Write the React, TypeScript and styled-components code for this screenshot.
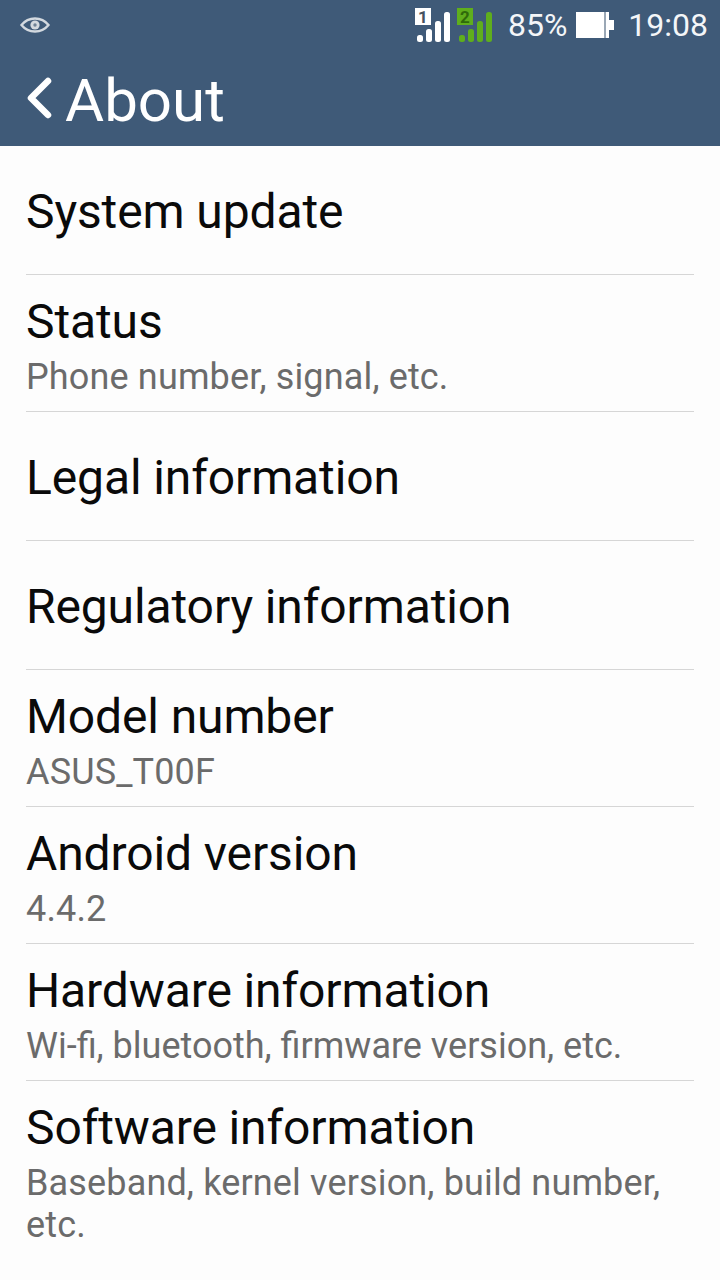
import styled, { createGlobalStyle } from 'styled-components';

const GlobalStyle = createGlobalStyle`
  html, body {
    margin: 0;
    padding: 0;
    background: #fdfdfd;
  }
`;

const Screen = styled.div`
  width: 720px;
  height: 1280px;
  overflow: hidden;
  background: #fdfdfd;
  font-family: Roboto, "Liberation Sans", sans-serif;
`;

const Header = styled.header`
  height: 146px;
  background: #3f5a78;
  color: #fff;
`;

const StatusBar = styled.div`
  height: 50px;
  display: flex;
  align-items: center;
  padding: 0 12px 0 20px;
`;

const StatusRight = styled.div`
  margin-left: auto;
  display: flex;
  align-items: center;
`;

const SimGroup = styled.div`
  display: flex;
  gap: 7px;
  margin-right: 16px;
`;

const StatusText = styled.span`
  font-size: 32px;
  line-height: 50px;
  color: #f4f6f8;
`;

const BatteryWrap = styled.span`
  display: flex;
  margin: 0 14px 0 9px;
`;

const ActionBar = styled.div`
  height: 96px;
  display: flex;
  align-items: center;
  padding-left: 26px;
  gap: 13px;
`;

const Title = styled.h1`
  margin: 0;
  padding-top: 6px;
  font-size: 60px;
  font-weight: 400;
  line-height: 96px;
`;

const List = styled.div`
  padding: 0 26px;
`;

const Row = styled.div<{ $tall?: boolean }>`
  height: ${({ $tall }) => ($tall ? 137 : 129)}px;
  border-bottom: 1px solid #d6d6d6;
  display: flex;
  flex-direction: column;
  justify-content: ${({ $tall }) => ($tall ? 'flex-start' : 'center')};
  padding-top: ${({ $tall }) => ($tall ? 19 : 4)}px;
  box-sizing: border-box;

  &:last-child {
    border-bottom: none;
    height: auto;
  }
`;

const RowTitle = styled.div`
  font-size: 48px;
  line-height: 56px;
  letter-spacing: -0.12px;
  color: #0a0a0a;
`;

const RowSummary = styled.div<{ $ligatures?: boolean }>`
  font-size: 36px;
  line-height: 42px;
  letter-spacing: ${({ $ligatures }) => ($ligatures ? 0 : 0.15)}px;
  color: #6b6b6b;
  margin-top: 6px;
`;

const EyeIcon = () => (
  <svg width="30" height="16" viewBox="0 0 30 16" fill="none">
    <path d="M1.5 8C5.5 3 10 1.5 15 1.5S24.5 3 28.5 8C24.5 13 20 14.5 15 14.5S5.5 13 1.5 8Z" stroke="#d3d9df" strokeWidth="2.4" />
    <circle cx="15" cy="8" r="4.6" fill="#d3d9df" />
    <circle cx="15" cy="8" r="1.7" fill="#6f8296" />
  </svg>
);

const BackIcon = () => (
  <svg width="26" height="42" viewBox="0 0 26 42" fill="none">
    <path d="M22 4L5 21L22 38" stroke="#fff" strokeWidth="6.5" strokeLinecap="round" strokeLinejoin="round" />
  </svg>
);

const SimIcon = ({ color, label, labelColor }: { color: string; label: string; labelColor: string }) => (
  <svg width="35" height="34" viewBox="0 0 35 34">
    <rect x="0" y="0" width="16" height="17" fill={color} />
    <text x="8" y="15" textAnchor="middle" fontFamily="Roboto, sans-serif" fontSize="17" fontWeight="700" fill={labelColor}>{label}</text>
    <rect x="2" y="27" width="6" height="7" rx="2.5" fill={color} />
    <rect x="11" y="21" width="6" height="13" rx="2.5" fill={color} />
    <rect x="20" y="13" width="6" height="21" rx="2.5" fill={color} />
    <rect x="29" y="4" width="6" height="30" rx="2.5" fill={color} />
  </svg>
);

const BatteryIcon = () => (
  <svg width="38" height="26" viewBox="0 0 38 26">
    <rect x="0" y="0" width="33" height="26" fill="#fff" />
    <rect x="28" y="0" width="2" height="26" fill="#9aa7b5" />
    <rect x="33" y="8" width="5" height="10" fill="#fff" />
  </svg>
);

const items = [
  { title: 'System update' },
  { title: 'Status', summary: 'Phone number, signal, etc.' },
  { title: 'Legal information' },
  { title: 'Regulatory information' },
  { title: 'Model number', summary: 'ASUS_T00F' },
  { title: 'Android version', summary: '4.4.2' },
  { title: 'Hardware information', summary: 'Wi-fi, bluetooth, firmware version, etc.', ligatures: true },
  { title: 'Software information', summary: 'Baseband, kernel version, build number, etc.' },
];

export default function App() {
  return (
    <Screen>
      <GlobalStyle />
      <Header>
        <StatusBar>
          <EyeIcon />
          <StatusRight>
            <SimGroup>
              <SimIcon color="#fff" label="1" labelColor="#46525e" />
              <SimIcon color="#5fae1c" label="2" labelColor="#2f6a0a" />
            </SimGroup>
            <StatusText>85%</StatusText>
            <BatteryWrap>
              <BatteryIcon />
            </BatteryWrap>
            <StatusText>19:08</StatusText>
          </StatusRight>
        </StatusBar>
        <ActionBar>
          <BackIcon />
          <Title>About</Title>
        </ActionBar>
      </Header>
      <List>
        {items.map((item) => (
          <Row key={item.title} $tall={!!item.summary}>
            <RowTitle>{item.title}</RowTitle>
            {item.summary && <RowSummary $ligatures={item.ligatures}>{item.summary}</RowSummary>}
          </Row>
        ))}
      </List>
    </Screen>
  );
}
